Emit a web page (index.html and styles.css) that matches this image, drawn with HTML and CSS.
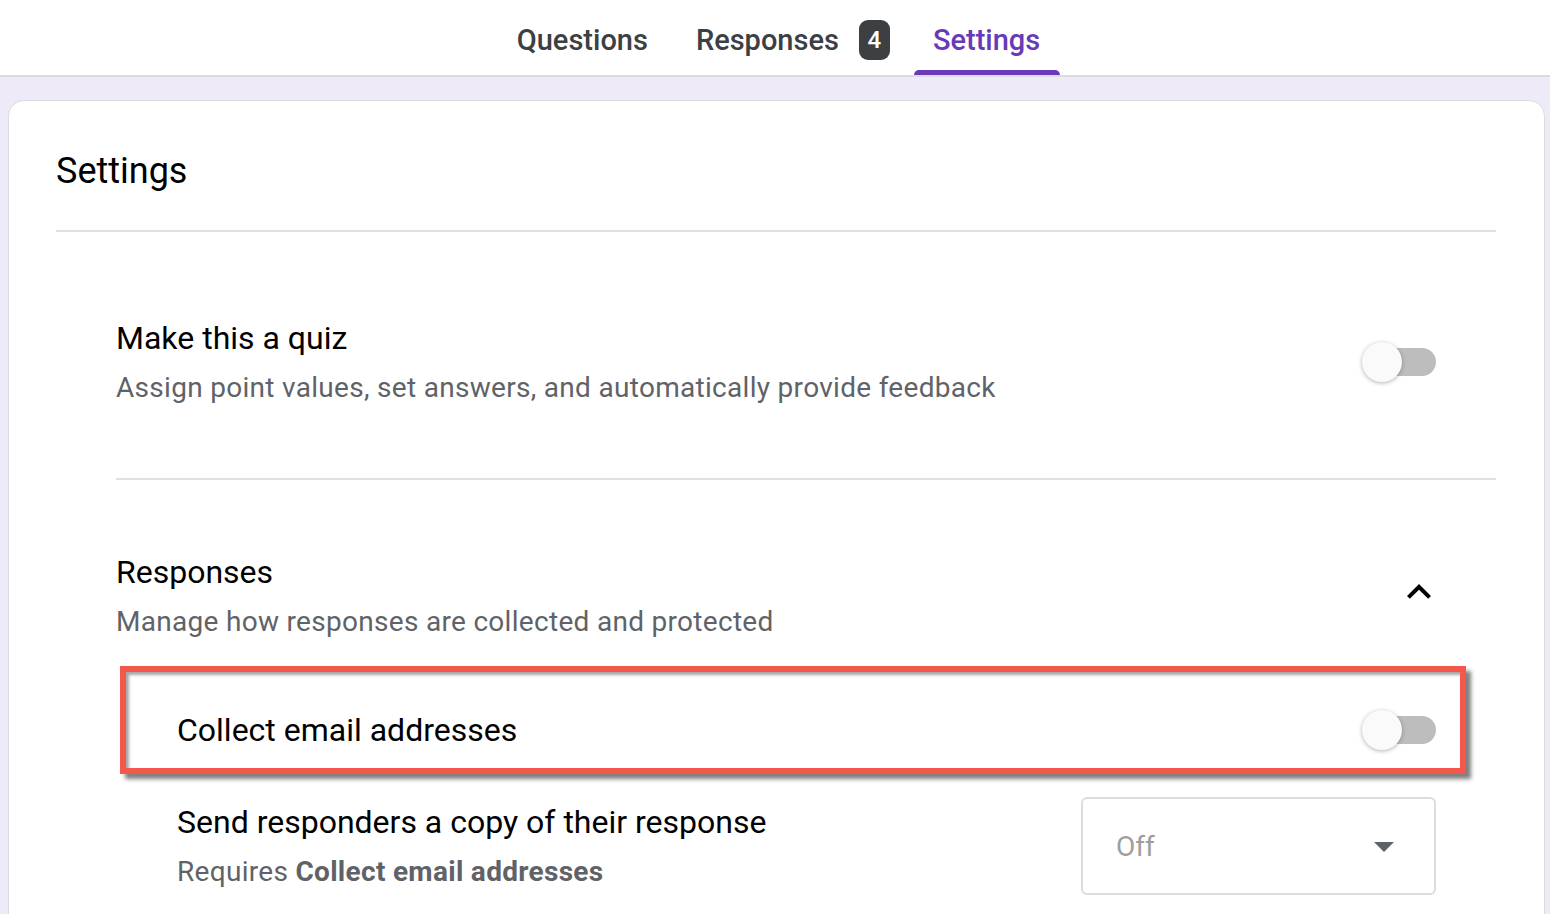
FILE: index.html
```html
<!DOCTYPE html>
<html lang="en">
<head>
    <meta charset="UTF-8">
    <meta name="viewport" content="width=device-width, initial-scale=1.0">
    <title>Form settings</title>
    <link rel="stylesheet" href="styles.css">
</head>
<body>
    <div class="tabs">
        <div class="tab">Questions</div>
        <div class="tab">Responses <span class="badge">4</span></div>
        <div class="tab active">Settings</div>
    </div>

    <div class="page">
        <div class="card">
            <h1 class="card-title">Settings</h1>

            <div class="section">
                <div class="row">
                    <div class="row-text">
                        <div class="title">Make this a quiz</div>
                        <div class="desc">Assign point values, set answers, and automatically provide feedback</div>
                    </div>
                    <div class="toggle"><div class="track"></div><div class="knob"></div></div>
                </div>
            </div>

            <div class="section responses">
                <div class="row">
                    <div class="row-text">
                        <div class="title">Responses</div>
                        <div class="desc">Manage how responses are collected and protected</div>
                    </div>
                    <svg class="chevron" viewBox="0 0 24 24" width="48" height="48">
                        <path d="M12 8l-6 6 1.41 1.41L12 10.83l4.59 4.58L18 14z" fill="#000"/>
                    </svg>
                </div>

                <div class="highlight">
                    <div class="sub-row">
                        <div class="title">Collect email addresses</div>
                        <div class="toggle"><div class="track"></div><div class="knob"></div></div>
                    </div>
                </div>

                <div class="copy-row">
                    <div class="row-text">
                        <div class="title">Send responders a copy of their response</div>
                        <div class="desc">Requires <strong>Collect email addresses</strong></div>
                    </div>
                    <div class="select">
                        <span>Off</span>
                        <svg viewBox="0 0 24 24" width="48" height="48">
                            <path d="M7 10l5 5 5-5z" fill="#5f6368"/>
                        </svg>
                    </div>
                </div>
            </div>
        </div>
    </div>
</body>
</html>
```

FILE: styles.css
```css
* {
    margin: 0;
    padding: 0;
    box-sizing: border-box;
}

body {
    font-family: Roboto, 'Liberation Sans', Arial, sans-serif;
    background: #eeeaf7;
    height: 914px;
    overflow: hidden;
    color: #202124;
}

.tabs {
    height: 77px;
    background: #fff;
    border-bottom: 2px solid #dcdae3;
    display: flex;
    justify-content: center;
    padding-left: 3px;
}

.tab {
    position: relative;
    display: flex;
    align-items: center;
    height: 75px;
    padding: 5px 24px 0;
    font-size: 29px;
    font-weight: 500;
    color: #3c4043;
}

.tab.active {
    color: #673ab7;
    padding: 5px 20px 0 19px;
}

.tab.active::after {
    content: '';
    position: absolute;
    left: 0;
    right: 0;
    bottom: 0;
    height: 5px;
    background: #673ab7;
    border-radius: 5px 5px 0 0;
}

.badge {
    display: inline-flex;
    align-items: center;
    justify-content: center;
    width: 31px;
    height: 40px;
    margin-left: 20px;
    border-radius: 9px;
    background: #3c4043;
    color: #fff;
    font-size: 24px;
    font-weight: 500;
}

.page {
    padding: 23px 5px 0 8px;
}

.card {
    background: #fff;
    border: 1px solid #dadce0;
    border-radius: 16px 16px 0 0;
    padding: 48px 48px 0 47px;
    height: 900px;
}

.card-title {
    font-size: 36px;
    font-weight: 400;
    line-height: 44px;
    color: #000;
    padding-bottom: 37px;
    border-bottom: 2px solid #e0e0e0;
}

.section {
    margin-left: 60px;
}

.section:not(.responses) {
    padding: 86px 0 72px;
    border-bottom: 2px solid #e0e0e0;
}

.responses {
    padding-top: 72px;
}

.row {
    display: flex;
    align-items: center;
    justify-content: space-between;
    padding-right: 60px;
}

.title {
    font-size: 32px;
    line-height: 40px;
    color: #000;
}

.desc {
    margin-top: 12px;
    font-size: 28px;
    line-height: 36px;
    color: #5f6368;
    letter-spacing: 0.3px;
}

.desc strong {
    font-weight: 700;
}

.toggle {
    position: relative;
    width: 74px;
    height: 40px;
    flex-shrink: 0;
}

.track {
    position: absolute;
    left: 18px;
    top: 6px;
    width: 56px;
    height: 28px;
    border-radius: 14px;
    background: #bdbdbd;
}

.knob {
    position: absolute;
    left: 0;
    top: 0;
    width: 40px;
    height: 40px;
    border-radius: 50%;
    background: #fafafa;
    box-shadow: 0 1px 4px rgba(0, 0, 0, 0.3);
}

.chevron {
    margin-right: -7px;
    margin-top: -8px;
}

.highlight {
    margin: 26px 30px 0 4px;
    border: 6px solid #f4574b;
    box-shadow: 5px 5px 4px rgba(0, 0, 0, 0.5), inset 3px 3px 3px rgba(0, 0, 0, 0.35);
}

.sub-row {
    display: flex;
    align-items: center;
    justify-content: space-between;
    padding: 30px 24px 10px 51px;
    height: 96px;
}

.copy-row {
    display: flex;
    align-items: center;
    justify-content: space-between;
    padding: 23px 60px 0 61px;
}

.select {
    display: flex;
    align-items: center;
    justify-content: space-between;
    width: 355px;
    height: 98px;
    border: 2px solid #dadce0;
    border-radius: 6px;
    padding: 0 26px 0 33px;
    font-size: 28px;
    color: #9e9e9e;
}
```
